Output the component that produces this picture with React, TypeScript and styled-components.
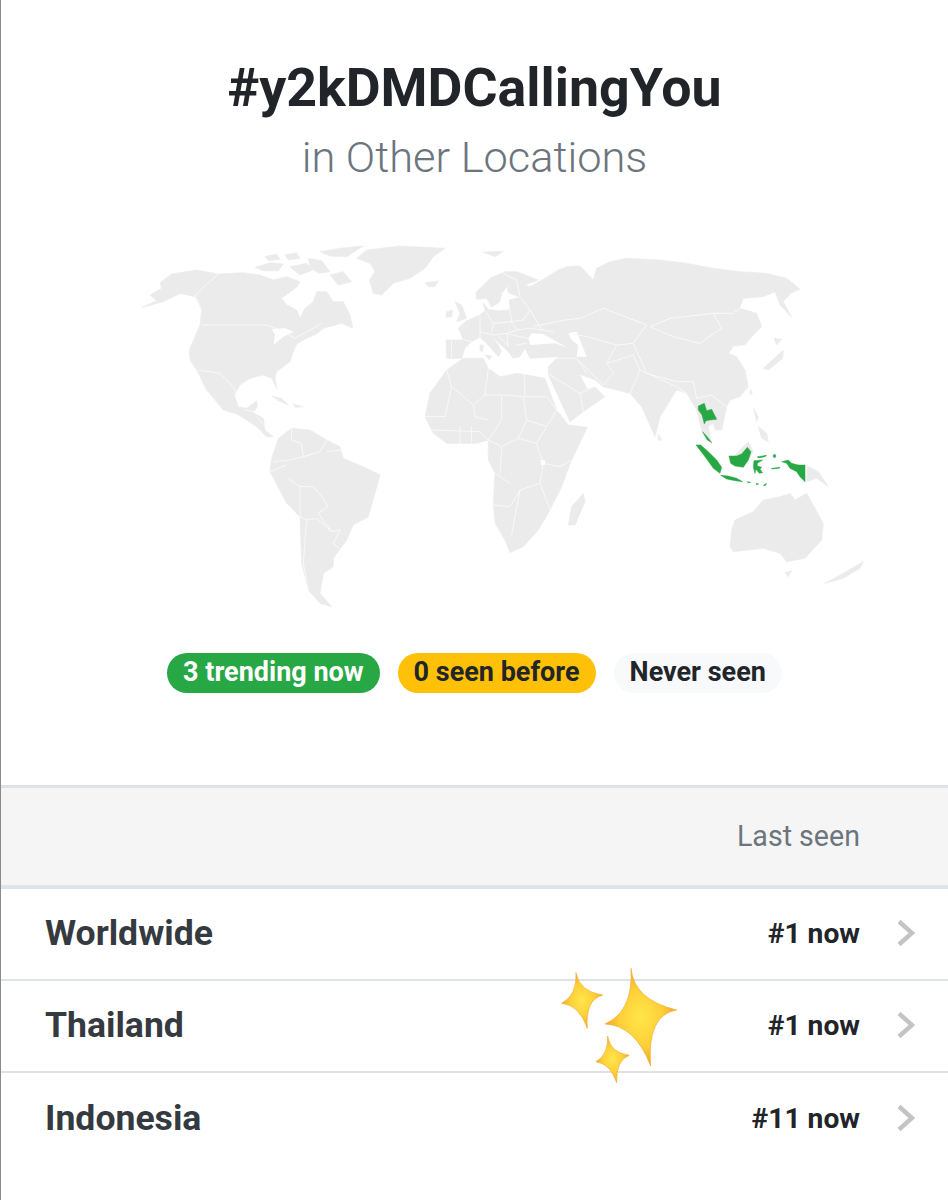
import styled, { createGlobalStyle } from "styled-components"

const GlobalStyle = createGlobalStyle`
    html, body {
        margin: 0;
        padding: 0;
        background: #fff;
    }
`

const rows = [
    { name: "Worldwide", rank: "#1 now" },
    { name: "Thailand", rank: "#1 now" },
    { name: "Indonesia", rank: "#11 now" },
]

const landWest = [
    // north america
    "M125,233 L170,212 L150,195 L185,175 L180,158 L215,132 L290,120 L355,132 L430,128 L480,135 L520,150 L560,140 L600,155 L590,172 L545,205 L560,225 L590,240 L600,265 L615,235 L640,215 L650,185 L680,185 L700,215 L730,215 L750,255 L758,295 L725,280 L700,287 L670,295 L650,312 L620,325 L590,342 L580,365 L570,395 L530,425 L525,445 L530,475 L515,445 L490,435 L450,445 L420,465 L403,495 L415,530 L440,535 L470,512 L472,530 L460,548 L490,565 L495,600 L520,620 L500,620 L470,590 L440,570 L410,552 L370,540 L345,510 L320,480 L290,420 L270,390 L268,360 L285,320 L300,285 L305,240 L285,200 L240,190 L190,215 Z",
    // arctic islands
    "M465,112 L510,98 L550,102 L535,122 L490,122 Z M495,80 L530,72 L540,88 L505,92 Z M555,75 L590,68 L600,85 L565,90 Z M570,110 L620,100 L640,120 L600,135 Z M625,85 L665,92 L690,125 L655,130 L630,110 Z M660,65 L720,55 L790,48 L740,80 L690,78 Z M690,135 L730,125 L755,155 L715,165 Z",
    // greenland, iceland, svalbard
    "M800,60 L900,48 L1035,55 L1000,80 L975,115 L930,145 L880,160 L845,195 L820,190 L808,150 L825,125 L810,100 L770,85 Z M975,158 L1015,153 L1005,170 L985,170 Z M1148,66 L1210,64 L1185,80 Z",
    // caribbean
    "M515,498 L545,505 L565,525 L535,512 Z M580,523 L610,530 L585,532 Z",
    // south america
    "M535,625 L575,595 L630,600 L680,630 L720,650 L730,685 L790,710 L840,735 L825,790 L805,860 L760,885 L740,930 L700,985 L700,1010 L670,1030 L660,1090 L695,1130 L660,1120 L625,1080 L605,1000 L600,860 L560,820 L510,725 L515,685 Z",
    // uk and ireland
    "M1065,215 L1085,225 L1100,265 L1070,275 L1080,250 Z M1040,245 L1058,240 L1055,260 L1038,262 Z",
]

const landEast = [
    // europe and asia
    "M-160,385 L-162,330 L-110,330 L-125,295 L-100,272 L-60,255 L-45,242 L-50,220 L-35,238 L-5,242 L30,240 L28,210 L60,202 L25,188 L22,175 L35,155 L5,190 L0,215 L-25,232 L-40,205 L-70,208 L-72,185 L-30,145 L15,125 L52,125 L115,150 L75,165 L90,170 L135,145 L175,120 L200,110 L240,108 L280,150 L290,115 L330,95 L380,85 L480,90 L560,100 L640,115 L720,125 L800,130 L860,145 L900,178 L860,195 L850,215 L875,262 L840,225 L825,185 L790,200 L730,205 L718,235 L770,250 L785,290 L755,320 L735,345 L700,350 L685,370 L710,380 L735,420 L745,470 L720,500 L690,510 L680,530 L665,600 L645,600 L640,580 L625,590 L635,638 L605,600 L590,540 L560,490 L530,480 L480,560 L465,620 L425,530 L390,490 L310,470 L285,450 L238,432 L262,478 L285,470 L315,500 L250,545 L210,575 L145,435 L145,410 L175,380 L90,385 L75,355 L80,345 L60,380 L40,385 L25,365 L-30,315 L-5,345 L5,365 L-5,380 L-45,335 L-60,322 L-85,335 L-105,355 L-115,385 Z",
    // islands
    "M790,415 L850,360 L848,385 L805,420 Z M822,325 L845,328 L830,345 Z M838,195 L870,195 L852,210 Z M760,535 L775,560 L770,575 Z M775,590 L800,610 L805,635 L785,625 Z M180,382 L195,385 L180,390 Z M-45,375 L-25,378 L-32,390 Z M-60,345 L-50,345 L-52,365 L-60,362 Z",
    // northern borneo
    "M700,680 L745,635 L760,665 L745,690 Z",
    // africa
    "M-225,560 L-210,490 L-160,420 L-110,385 L-50,385 L-35,415 L0,440 L50,430 L135,445 L170,540 L205,585 L262,592 L215,690 L185,770 L150,840 L115,900 L70,950 L30,968 L15,930 L-15,880 L-20,820 L-15,730 L-35,690 L-35,630 L-70,640 L-160,640 L-200,610 Z",
    // madagascar
    "M250,790 L255,815 L225,885 L205,885 L215,830 Z",
    // australia, tasmania
    "M695,900 L705,870 L760,845 L790,810 L840,800 L870,790 L885,810 L920,790 L970,880 L965,930 L915,985 L860,995 L840,970 L790,955 L700,965 L690,950 Z M855,1028 L875,1022 L865,1040 Z",
    // new zealand
    "M975,1060 L1020,1035 L1090,995 L1080,1015 L1030,1045 Z",
    // papua new guinea
    "M918,705 L955,725 L985,770 L950,745 L918,755 Z",
    // sri lanka, taiwan
    "M475,612 L485,630 L475,632 Z M752,478 L757,490 L750,495 Z",
]

const seas = [
    // black sea, caspian, lake victoria
    "M85,325 L95,310 L130,312 L200,352 L165,340 L90,345 Z",
    "M205,310 L230,305 L260,380 L230,380 L235,345 L215,330 Z",
    "M122,690 L135,690 L135,705 L122,705 Z",
]

const seasWest = [
    // great lakes
    "M515,297 L555,295 L580,305 L550,320 L520,345 L525,315 Z",
    "M675,312 L700,300 L690,315 Z",
]

const bordersWest =
    "M355,132 L285,195 L305,240 M305,285 L500,285 L540,300 L585,325 L640,295 L665,280 M292,425 L310,470 L325,490 M295,420 L360,430 L400,470 L420,510 M430,540 L465,545 M470,560 L495,590 " +
    "M575,595 L575,630 L605,640 L610,680 L570,690 L520,695 M510,725 L560,705 M610,680 L660,665 L680,630 M680,665 L730,660 M565,745 L600,770 L640,770 L665,800 L685,830 L655,850 L695,905 L720,900 L700,940 M600,770 L600,860 L620,870 L650,865 L695,905 M620,870 L610,1000 L625,1080 M700,940 L730,965"

const bordersEast =
    "M-225,560 L-165,560 L-145,470 L-80,525 L-75,560 L-35,570 M-145,470 L-160,420 M-80,525 L-45,495 L-35,415 M-45,495 L5,495 L5,570 L-35,630 M5,495 L70,500 L80,570 L55,625 L5,650 L-35,630 " +
    "M75,500 L72,420 M70,500 L140,500 L170,540 M80,570 L140,590 L170,540 L210,575 M140,590 L110,640 L55,625 M110,640 L130,700 L180,710 L215,690 M130,700 L120,760 L60,780 L30,830 L-20,825 M120,760 L150,840 M60,780 L35,915 M-15,730 L30,760 M5,650 L0,730 M-205,600 L-60,605 L-35,630 M-120,590 L-120,640 M-85,590 L-85,640 " +
    "M-145,330 L-145,385 M-110,330 L-85,335 M-60,255 L-60,322 M-60,305 L-20,315 L20,310 L60,320 L85,325 M-45,242 L-20,280 L-25,305 M-20,280 L35,275 L30,240 M35,275 L50,300 L90,295 L125,300 M50,300 L20,310 L25,350 M60,202 L90,240 L70,270 L35,275 M-72,185 L-25,140 M0,125 L50,150 L60,200 M90,240 L125,300 L160,305 M-5,320 L25,345 M50,345 L80,340 " +
    "M195,270 L240,265 L310,235 L440,285 L400,340 L350,345 L260,320 L205,310 M195,270 L100,290 M450,290 L510,265 L640,250 L665,295 L600,340 L520,320 L450,290 M640,250 L700,250 L718,235 " +
    "M145,385 L230,385 L260,430 M230,385 L310,465 M310,465 L340,430 L320,400 L350,345 M320,400 L400,375 L420,420 L390,490 M420,420 L530,470 L560,490 M400,340 L440,430 L530,455 L580,455 L590,505 L635,495 L680,530 M700,350 L740,345 M145,432 L240,490 L285,470 M240,490 L250,545 " +
    "M920,705 L918,755"

const App = () => (
    <Page>
        <GlobalStyle />
        <Heading>
            <Title>#y2kDMDCallingYou</Title>
            <Subtitle>in Other Locations</Subtitle>
        </Heading>
        <MapFigure viewBox="100 230 800 400" aria-hidden="true">
            <g transform="translate(100 230) scale(0.33333)">
                <g fill="#ebebeb" stroke="#ebebeb" strokeWidth="2" strokeLinejoin="round">
                    {landWest.map((d, i) => <path key={i} d={d} />)}
                    <g transform="translate(1200 0)">
                        {landEast.map((d, i) => <path key={i} d={d} />)}
                    </g>
                </g>
                <g fill="#ffffff">
                    {seasWest.map((d, i) => <path key={i} d={d} />)}
                    <g transform="translate(1200 0)">
                        {seas.map((d, i) => <path key={i} d={d} />)}
                    </g>
                </g>
                <g fill="none" stroke="#fafafa" strokeWidth="2.6">
                    <path d={bordersWest} />
                    <g transform="translate(1200 0)">
                        <path d={bordersEast} />
                    </g>
                </g>
                <g transform="translate(1200 0)" fill="#28a745" stroke="#28a745" strokeWidth="1.5" strokeLinejoin="round">
                    <path d="M595,528 L613,520 L620,542 L635,538 L650,568 L630,570 L618,572 L613,582 L606,555 L595,540 Z" />
                    <path d="M607,605 L620,618 L635,638 L622,630 Z" />
                    <path d="M588,645 L602,645 L625,665 L650,690 L665,712 L660,730 L640,715 L615,680 Z" />
                    <path d="M662,736 L685,738 L710,745 L728,755 L705,752 L680,747 Z" />
                    <path d="M687,678 L710,678 L725,672 L742,652 L753,665 L745,690 L730,712 L705,708 L692,700 Z" />
                    <path d="M762,692 L788,690 L772,700 L772,708 L785,712 L780,718 L788,728 L778,730 L768,718 L765,730 L760,712 Z" />
                    <path d="M845,695 L865,690 L875,700 L895,705 L915,705 L915,755 L900,740 L890,725 L870,715 L860,700 Z" />
                    <path d="M772,680 L800,676 L795,680 L775,684 Z M820,674 L827,674 L827,682 L820,682 Z M815,715 L840,712 L838,715 L815,717 Z M742,755 L752,757 L745,759 Z M768,760 L776,762 L770,764 Z M790,766 L800,760 L796,767 Z" />
                </g>
            </g>
        </MapFigure>
        <Legend>
            <Pill $tone="trending">3 trending now</Pill>
            <Pill $tone="seen">0 seen before</Pill>
            <Pill $tone="never">Never seen</Pill>
        </Legend>
        <TableHead>Last seen</TableHead>
        <List>
            {rows.map(row => (
                <Row key={row.name}>
                    <Name>{row.name}</Name>
                    <Rank>{row.rank}</Rank>
                    <Chevron viewBox="0 0 18 28" aria-hidden="true">
                        <path d="M2,2.5 L15,14 L2,25.5" />
                    </Chevron>
                </Row>
            ))}
        </List>
        <Sparkles viewBox="0 0 420 420" aria-hidden="true">
            <defs>
                <radialGradient id="spark" cx="50%" cy="50%" r="55%">
                    <stop offset="0%" stopColor="#ffe64a" />
                    <stop offset="55%" stopColor="#fdcf38" />
                    <stop offset="100%" stopColor="#ee9c22" />
                </radialGradient>
            </defs>
            <g fill="url(#spark)" stroke="#f2ab2e" strokeWidth="2" strokeLinejoin="round">
                <path d="M273,55 Q282,150 410,180 Q320,195 332,348 Q285,225 195,222 Q280,185 273,55 Z" />
                <path d="M108,68 Q118,125 188,135 Q135,150 142,235 Q118,165 65,160 Q112,135 108,68 Z" />
                <path d="M203,258 Q210,308 268,316 Q228,330 230,398 Q212,342 168,335 Q205,315 203,258 Z" />
            </g>
        </Sparkles>
    </Page>
)

export default App

const Page = styled.div`
    position: relative;
    width: 948px;
    height: 1200px;
    box-sizing: border-box;
    border-left: 1px solid #8a8a8a;
    background: #fff;
    overflow: hidden;
    font-family: Roboto, "Liberation Sans", sans-serif;
`

const Heading = styled.header`
    display: flex;
    flex-direction: column;
    align-items: center;
    padding-top: 60px;
`

const Title = styled.h1`
    margin: 0;
    font-size: 53.7px;
    line-height: 56px;
    font-weight: 700;
    color: #212529;
`

const Subtitle = styled.p`
    margin: 16px 0 0;
    font-size: 43.4px;
    line-height: 52px;
    font-weight: 300;
    color: #6c757d;
`

const MapFigure = styled.svg`
    display: block;
    width: 800px;
    height: 400px;
    margin: 46px 0 0 99px;
    filter: blur(0.4px);
`

const toneStyles = {
    trending: "background: #28a745; color: #fff;",
    seen: "background: #ffc107; color: #212529;",
    never: "background: #f8f9fa; color: #212529;",
}

const Legend = styled.div`
    display: flex;
    justify-content: center;
    gap: 18px;
    margin-top: 23px;
`

const Pill = styled.span<{ $tone: keyof typeof toneStyles }>`
    display: flex;
    align-items: center;
    box-sizing: border-box;
    height: 40px;
    padding: 0 16px 3px;
    border-radius: 20px;
    font-size: 27px;
    font-weight: 700;
    ${props => toneStyles[props.$tone]}
`

const TableHead = styled.div`
    display: flex;
    align-items: center;
    justify-content: flex-end;
    box-sizing: border-box;
    height: 104px;
    margin-top: 92px;
    padding-right: 88px;
    padding-bottom: 2px;
    border-top: 3px solid #dee2e6;
    border-bottom: 4px solid #dde4ea;
    background: #f5f5f5;
    font-size: 28.6px;
    color: #6c757d;
`

const List = styled.div`
    display: flex;
    flex-direction: column;
`

const Row = styled.div`
    display: flex;
    align-items: center;
    box-sizing: border-box;
    height: 92px;
    padding: 0 33px 2px 44px;
    border-bottom: 2px solid #dee2e6;

    &:last-child {
        border-bottom: none;
    }
`

const Name = styled.span`
    flex: 1;
    font-size: 35.6px;
    font-weight: 700;
    color: #343a40;
`

const Rank = styled.span`
    font-size: 28.2px;
    font-weight: 700;
    color: #212529;
`

const Chevron = styled.svg`
    width: 18px;
    height: 28px;
    margin-left: 37px;

    path {
        fill: none;
        stroke: #c4c4c4;
        stroke-width: 4.4;
    }
`

const Sparkles = styled.svg`
    position: absolute;
    left: 539px;
    top: 950px;
    width: 140px;
    height: 140px;
`
